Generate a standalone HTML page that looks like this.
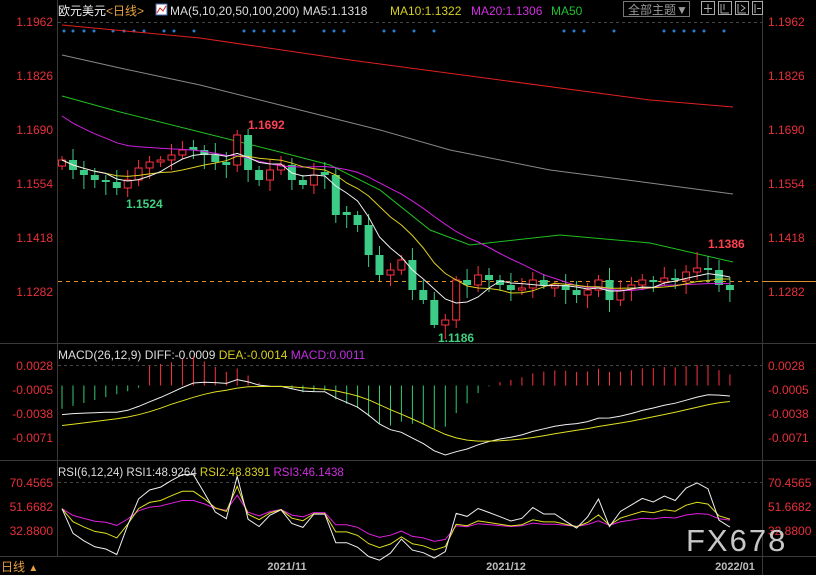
<!DOCTYPE html>
<html><head><meta charset="utf-8"><style>
body{margin:0;background:#000;width:816px;height:575px;overflow:hidden;font-family:"Liberation Sans","Noto Sans CJK SC",sans-serif}
svg{position:absolute;left:0;top:0}
</style></head><body>
<svg id="s" width="816" height="575" xmlns="http://www.w3.org/2000/svg" font-family="Liberation Sans, Noto Sans CJK SC, sans-serif">
<rect width="816" height="575" fill="#000"/>
<g stroke="#3a3a3a" stroke-width="1">
<line x1="57.5" y1="0" x2="57.5" y2="556"/><line x1="762.5" y1="0" x2="762.5" y2="575"/>
<line x1="0" y1="343.5" x2="816" y2="343.5"/><line x1="0" y1="460.5" x2="816" y2="460.5"/><line x1="0" y1="556.5" x2="816" y2="556.5"/>
</g>
<g stroke="#444" stroke-dasharray="3,3"><line x1="58" y1="22.5" x2="762" y2="22.5"/><line x1="58" y1="365.5" x2="762" y2="365.5"/><line x1="58" y1="482.5" x2="762" y2="482.5"/></g>
<line x1="58" y1="281.5" x2="762" y2="281.5" stroke="#e0902a" stroke-dasharray="4,4"/>
<line x1="762" y1="281.5" x2="816" y2="281.5" stroke="#e0902a"/>
<g fill="#e8303a" font-size="12">
<g text-anchor="end"><text x="53" y="26">1.1962</text><text x="53" y="80">1.1826</text><text x="53" y="134">1.1690</text><text x="53" y="188">1.1554</text><text x="53" y="242">1.1418</text><text x="53" y="296">1.1282</text>
<text x="53" y="370">0.0028</text><text x="53" y="394">-0.0005</text><text x="53" y="418">-0.0038</text><text x="53" y="442">-0.0071</text>
<text x="53" y="487">70.4565</text><text x="53" y="511">51.6682</text><text x="53" y="535">32.8800</text></g>
<text x="768" y="26">1.1962</text><text x="768" y="80">1.1826</text><text x="768" y="134">1.1690</text><text x="768" y="188">1.1554</text><text x="768" y="242">1.1418</text><text x="768" y="296">1.1282</text>
<text x="768" y="370">0.0028</text><text x="768" y="394">-0.0005</text><text x="768" y="418">-0.0038</text><text x="768" y="442">-0.0071</text>
<text x="768" y="487">70.4565</text><text x="768" y="511">51.6682</text><text x="768" y="535">32.8800</text>
</g>
<g font-size="12">
<text x="58" y="15" fill="#eee">欧元美元<tspan fill="#e8a040">&lt;日线&gt;</tspan></text>
<rect x="156" y="4" width="11" height="11" fill="#fff" stroke="#46a"/><path d="M157,13 L160,8 L163,11 L166,6" stroke="#d22" fill="none"/>
<text x="170" y="15" fill="#ddd">MA(5,10,20,50,100,200)  MA5:1.1318</text>
<text x="390" y="15" fill="#d8d020">MA10:1.1322</text>
<text x="471" y="15" fill="#d030e0">MA20:1.1306</text>
<text x="551" y="15" fill="#20c030">MA50</text>
<rect x="623.5" y="1.5" width="66" height="15" fill="none" stroke="#777"/>
<text x="628" y="14" fill="#999">全部主题▼</text>
<g stroke="#aaa" fill="none"><rect x="701.5" y="1.5" width="13" height="13"/><rect x="718.5" y="1.5" width="13" height="13"/><rect x="735.5" y="1.5" width="13" height="13"/><rect x="752.5" y="1.5" width="10" height="13"/>
<path d="M708,4v9M704,8.5h8M721,4v9h8M724,4v6M738,4v9h8M741,5l4,3l-4,3M755,4v9M757,8.5h4"/></g>
<text x="58" y="359" fill="#ddd">MACD(26,12,9) DIFF:-0.0009 <tspan fill="#d8d020">DEA:-0.0014</tspan> <tspan fill="#c030e0">MACD:0.0011</tspan></text>
<text x="58" y="476" fill="#ddd" font-size="11.5">RSI(6,12,24) RSI1:48.9264 <tspan fill="#d8d020">RSI2:48.8391</tspan> <tspan fill="#d030e0">RSI3:46.1438</tspan></text>
<text x="287" y="570" fill="#bbb" text-anchor="middle" font-weight="bold" font-size="11">2021/11</text>
<text x="506" y="570" fill="#bbb" text-anchor="middle" font-weight="bold" font-size="11">2021/12</text>
<text x="735" y="570" fill="#bbb" text-anchor="middle" font-weight="bold" font-size="11">2022/01</text>
<text x="1" y="571" fill="#e8a040">日线 <tspan font-size="10">▲</tspan></text>
<text x="248" y="129" fill="#ff4050" font-weight="bold">1.1692</text>
<text x="126" y="208" fill="#40d080" font-weight="bold">1.1524</text>
<text x="438" y="342" fill="#40d080" font-weight="bold">1.1186</text>
<text x="708" y="248" fill="#ff4050" font-weight="bold">1.1386</text>
</g>
<g id="g"></g>
<text x="686" y="551" fill="#ddd" font-size="31" letter-spacing="2" opacity="0.9">FX678</text>
</svg>
<script>
(function(){
var ys=[160,170,175,180,182,188,180,168,162,160,155,150,150,155,162,165,135,170,180,170,165,180,185,175,175,215,215,225,255,275,270,260,290,300,325,320,280,285,275,280,285,290,288,280,285,285,290,295,290,280,300,290,285,280,282,278,280,272,268,270,285,290];
var g='',N=ys.length,xs=[];for(var i=0;i<N;i++)xs.push(62+i*10.95);
function P(a,c,w){return '<polyline fill="none" stroke="'+c+'" stroke-width="'+(w||1)+'" points="'+a.map(function(p){return p[0].toFixed(1)+','+p[1].toFixed(1)}).join(' ')+'"/>'}
[64,73,84,94,113,124,134,144,164,174,194,244,254,264,274,284,294,324,334,344,384,394,414,434,564,574,584,614,664,674,684,694,704,724].forEach(function(x){g+='<circle cx="'+x+'" cy="31" r="1.5" fill="#2a7fd0"/>'});
g+=P([[62,25],[200,38],[350,60],[500,80],[650,100],[733,107]],'#e02020');
g+=P([[62,55],[120,68],[200,85],[300,110],[380,130],[450,150],[550,170],[650,183],[733,194]],'#888');
g+=P([[62,96],[120,112],[200,132],[280,152],[330,165],[380,190],[430,230],[470,245],[560,235],[650,243],[733,262]],'#20c020');
for(var i=0;i<N;i++){var c=ys[i],o=i?ys[i-1]:c+6,x=xs[i];if(Math.abs(c-o)<2)o=c+3*(i%2?1:-1);var up=c<o,tp=Math.min(c,o),bt=Math.max(c,o),col=up?'#ff3040':'#3ccc88';
var hi=tp-4-(i*7%9),lo=bt+4+(i*5%11);if(i==16)hi=130;if(i==6)lo=197;if(i==34)lo=328;if(i==58)hi=252;
g+='<line x1="'+x.toFixed(1)+'" y1="'+hi+'" x2="'+x.toFixed(1)+'" y2="'+lo+'" stroke="'+col+'"/>';
g+=up?'<rect x="'+(x-3.5).toFixed(1)+'" y="'+tp+'" width="7" height="'+(bt-tp)+'" fill="#000" stroke="'+col+'"/>':'<rect x="'+(x-4).toFixed(1)+'" y="'+tp+'" width="8" height="'+(bt-tp)+'" fill="'+col+'"/>';}
function ma(n){var r=[];for(var i=0;i<N;i++){var s=0,k=0;for(var j=Math.max(0,i-n+1);j<=i;j++){s+=ys[j];k++}r.push([xs[i],s/k])}return r}
var m20=ma(20);m20=m20.map(function(p,i){return [p[0],p[1]-(i<20?(20-i)*2.2:0)]});
g+=P(m20,'#d020e0');g+=P(ma(10),'#e0d020');g+=P(ma(5),'#f0f0f0');
var pr=ys.map(function(y){return 1.1962-(y-22)/53.8*0.0136});
function ema(a,n){var k=2/(n+1),r=[a[0]];for(var i=1;i<a.length;i++)r.push(r[i-1]+k*(a[i]-r[i-1]));return r}
var e12=ema(pr,12),e26=ema(pr,26),dif=pr.map(function(_,i){return e12[i]-e26[i]-0.004*Math.max(0,1-i/12)}),dea=ema(dif,9);dea=dea.map(function(v,i){return v-0.0015*Math.max(0,1-i/10)});
function my(v){return 385.5-v/0.0033*24}
for(var i=0;i<N;i++){var h=(dif[i]-dea[i])*2;if(i<7)h=-0.0032*(1-i/8);else if(i==7)h=-0.0003;var col=h>0?'#ff3040':'#30cc70';g+='<line x1="'+xs[i].toFixed(1)+'" y1="385.5" x2="'+xs[i].toFixed(1)+'" y2="'+my(h).toFixed(1)+'" stroke="'+col+'"/>'}
g+=P(dif.map(function(v,i){return [xs[i],my(v)]}),'#f0f0f0');g+=P(dea.map(function(v,i){return [xs[i],my(v)]}),'#e0e020');
function rsi(n){var r=[],U=0,D=0;for(var i=0;i<N;i++){var d=i?pr[i]-pr[i-1]:0,u=Math.max(d,0),dn=Math.max(-d,0);if(i==0){U=0.0005;D=0.0005}U=(U*(n-1)+u)/n;D=(D*(n-1)+dn)/n;var v=100*U/(U+D);r.push([xs[i],482+(70.4565-v)*1.304])}return r}
g+=P(rsi(24),'#e020e0');g+=P(rsi(12),'#e0e020');g+=P(rsi(6),'#f0f0f0');
document.getElementById('g').innerHTML=g;
})();
</script>
</body></html>
